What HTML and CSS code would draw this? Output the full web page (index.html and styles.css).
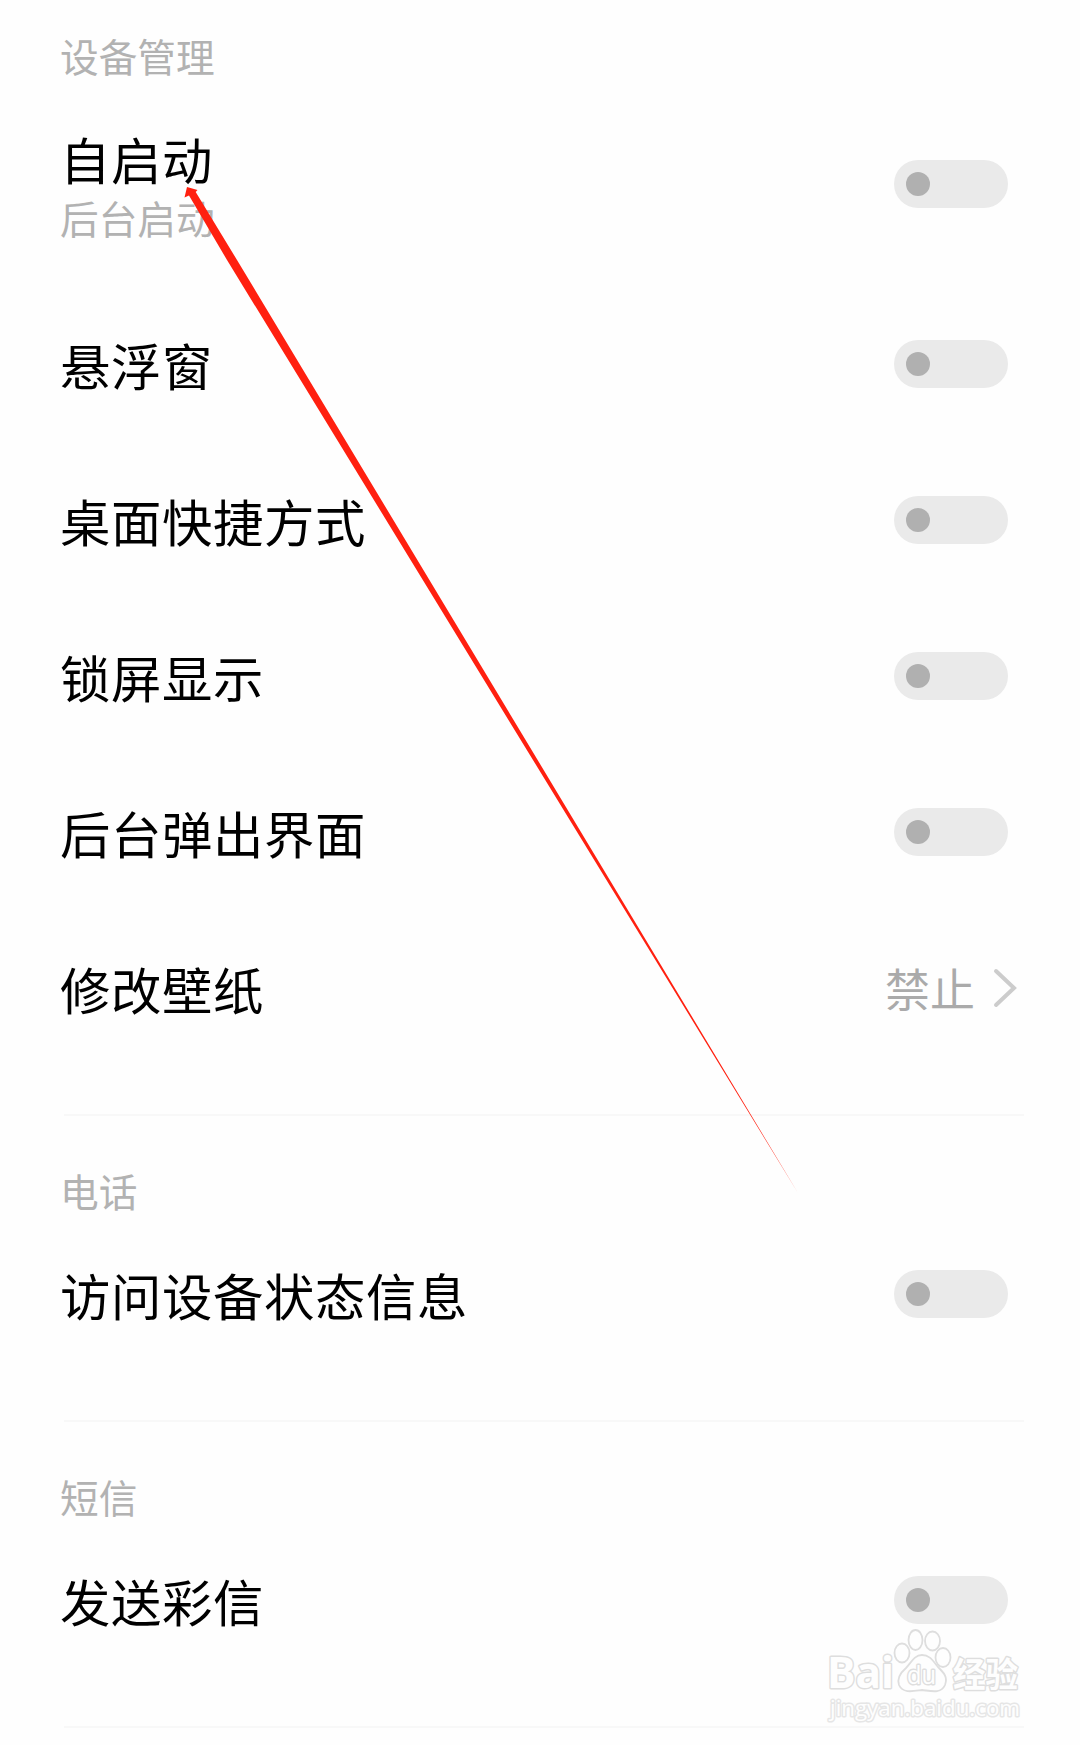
FILE: index.html
```html
<!DOCTYPE html>
<html lang="zh-CN">
  <head>
    <meta charset="UTF-8" />
    <meta name="viewport" content="width=device-width, initial-scale=1.0" />
    <title>权限管理</title>
    <link rel="stylesheet" href="styles.css">
  </head>
  <body>
    <main class="page">
      <section class="group">
        <h2>设备管理</h2>
        <div class="row row-tall">
          <div class="label">
            <div class="title">自启动</div>
            <div class="desc">后台启动</div>
          </div>
          <span class="switch"></span>
        </div>
        <div class="row">
          <div class="title">悬浮窗</div>
          <span class="switch"></span>
        </div>
        <div class="row">
          <div class="title">桌面快捷方式</div>
          <span class="switch"></span>
        </div>
        <div class="row">
          <div class="title">锁屏显示</div>
          <span class="switch"></span>
        </div>
        <div class="row">
          <div class="title">后台弹出界面</div>
          <span class="switch"></span>
        </div>
        <div class="row">
          <div class="title">修改壁纸</div>
          <div class="value">
            <span>禁止</span>
            <svg class="chevron" width="24" height="42" viewBox="0 0 24 42">
              <path d="M3 4 L21 21 L3 38" />
            </svg>
          </div>
        </div>
      </section>

      <section class="group">
        <h2>电话</h2>
        <div class="row">
          <div class="title">访问设备状态信息</div>
          <span class="switch"></span>
        </div>
      </section>

      <section class="group">
        <h2>短信</h2>
        <div class="row">
          <div class="title">发送彩信</div>
          <span class="switch"></span>
        </div>
      </section>

      <!-- red pointer arrow -->
      <svg class="arrow" width="1080" height="1745" viewBox="0 0 1080 1745">
        <polygon points="187,187 197.5,190 195.7,192 237,260 798,1193 227,260 189,195.5 184.5,197.5" />
      </svg>

      <!-- watermark -->
      <svg class="watermark" width="210" height="105" viewBox="820 1625 210 105">
        <text class="brand" x="827" y="1688" textLength="67" lengthAdjust="spacingAndGlyphs">Bai</text>
        <g class="paw">
          <ellipse cx="902" cy="1653" rx="7.5" ry="9.5" />
          <ellipse cx="915.5" cy="1640" rx="7" ry="10" />
          <ellipse cx="932.5" cy="1641" rx="7.5" ry="9.5" />
          <ellipse cx="943" cy="1657.5" rx="7.5" ry="9.5" />
          <path d="M922 1655 C914 1655 911 1663 906 1668 C899 1674 897 1679 899 1685 C903 1694 914 1691 922 1690 C931 1691 941 1694 945 1685 C948 1677 944 1673 938 1667 C933 1661 930 1655 922 1655 Z" />
        </g>
        <text class="du" x="907" y="1684" textLength="29" lengthAdjust="spacingAndGlyphs">du</text>
        <text class="cn" x="953" y="1687" textLength="65" lengthAdjust="spacingAndGlyphs">经验</text>
        <text class="url" x="830" y="1716" textLength="190" lengthAdjust="spacingAndGlyphs">jingyan.baidu.com</text>
      </svg>
    </main>
  </body>
</html>
```

FILE: styles.css
```css
body {
  margin: 0;
  background-color: #fefefe;
  font-family: "Noto Sans CJK SC", sans-serif;
  color: #000;
}

.page {
  position: relative;
  height: 1745px;
  overflow: hidden;
}

.group {
  margin: 0 56px 0 64px;
  padding-bottom: 48px;
  border-bottom: 2px solid #f8f8f8;
}

.group h2 {
  margin: 0 0 2px -4px;
  padding-top: 50px;
  height: 48px;
  line-height: 48px;
  font-size: 38.7px;
  font-weight: 400;
  color: #b2b2b2;
}

.group:first-child h2 {
  padding-top: 31px;
}

.row {
  display: flex;
  justify-content: space-between;
  align-items: center;
  height: 156px;
  margin-left: -4px;
  padding-right: 16px;
}

.row-tall {
  height: 205px;
}

.label {
  padding-top: 6px;
}

.title {
  padding-top: 2px;
  font-size: 50.4px;
  line-height: 60px;
  letter-spacing: 0.6px;
}

.desc {
  font-size: 38.7px;
  line-height: 57px;
  color: #b2b2b2;
}

.switch {
  width: 114px;
  height: 48px;
  border-radius: 24px;
  background-color: #eaeaea;
}

.switch::before {
  content: "";
  display: block;
  width: 24px;
  height: 24px;
  margin: 12px;
  border-radius: 50%;
  background-color: #b0b0b0;
}

.value {
  display: flex;
  align-items: center;
  gap: 18px;
  margin-right: -9px;
  font-size: 45px;
  line-height: 60px;
  color: #aaa;
}

.chevron path {
  fill: none;
  stroke: #ccc;
  stroke-width: 4;
  stroke-linecap: round;
}

.arrow {
  position: absolute;
  top: 0;
  left: 0;
  fill: #ff2010;
}

.watermark {
  position: absolute;
  top: 1625px;
  left: 820px;
  fill: #fefefe;
  stroke: #dedede;
  stroke-width: 3;
  stroke-linejoin: round;
  paint-order: stroke;
}

.watermark .paw {
  stroke-width: 1.8;
  paint-order: normal;
}

.watermark .brand {
  font: bold 43px "Open Sans", sans-serif;
}

.watermark .du {
  font: 25px "Open Sans", sans-serif;
}

.watermark .cn {
  font: bold 34px "Noto Sans CJK SC", sans-serif;
}

.watermark .url {
  font: 22px "Open Sans", sans-serif;
  stroke: #e6e6e6;
}
```
